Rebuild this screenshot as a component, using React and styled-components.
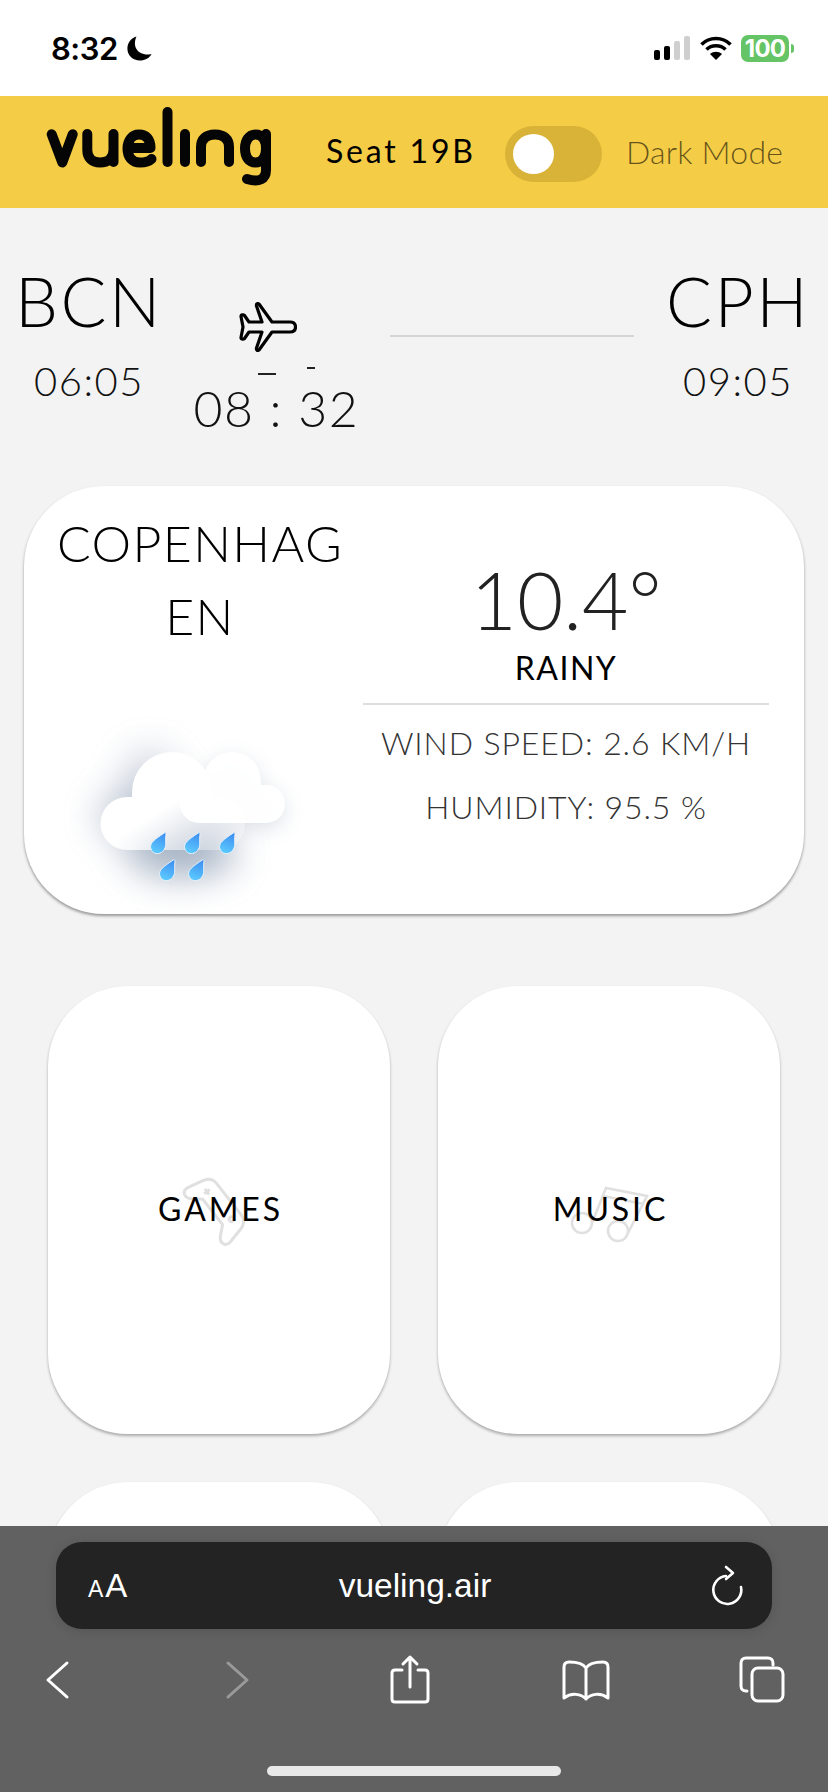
import React from "react";
import styled, { createGlobalStyle } from "styled-components";

const GlobalStyle = createGlobalStyle`
  html, body {
    margin: 0;
    padding: 0;
    height: 100%;
    overflow: hidden;
    background: #f3f3f3;
    font-family: "Lato", "Open Sans", sans-serif;
  }
`;

const Page = styled.div`
  width: 828px;
  height: 1792px;
  overflow: hidden;
  color: #000;
`;

const StatusBar = styled.div`
  height: 96px;
  background: #fff;
  display: flex;
  align-items: center;
  justify-content: space-between;
  padding: 0 39px 0 51px;
  box-sizing: border-box;
`;
const StatusTime = styled.div`
  display: flex;
  align-items: center;
  gap: 9px;
  font-family: "Inter", sans-serif;
  font-size: 31px;
  font-weight: 600;
  letter-spacing: -0.5px;
`;
const StatusIcons = styled.div`
  display: flex;
  align-items: center;
  gap: 9px;
`;
const Battery = styled.div`
  width: 48px;
  height: 27px;
  border-radius: 7px;
  background: #65c466;
  color: #fff;
  font-family: "Inter", sans-serif;
  font-size: 24px;
  font-weight: 700;
  letter-spacing: -0.8px;
  display: flex;
  align-items: center;
  justify-content: center;
  position: relative;
  &::after {
    content: "";
    position: absolute;
    right: -5px;
    top: 9px;
    width: 3px;
    height: 9px;
    border-radius: 0 3px 3px 0;
    background: #65c466;
  }
`;

const Header = styled.header`
  height: 112px;
  background: #f5cc45;
  display: flex;
  align-items: center;
  padding-left: 46px;
`;
const Logo = styled.svg`
  width: 226px;
  height: 79px;
  margin: -12px 54px 0 0;
  flex: none;
`;
const Seat = styled.span`
  width: 147px;
  font-size: 32px;
  font-weight: 400;
  letter-spacing: 2.8px;
  white-space: nowrap;
  margin: -3px 32px 0 0;
`;
const Toggle = styled.div`
  width: 97px;
  height: 56px;
  border-radius: 28px;
  background: #d9b338;
  display: flex;
  align-items: center;
  padding-left: 8px;
  box-sizing: border-box;
  margin: 4px 24px 0 0;
  flex: none;
`;
const Knob = styled.div`
  width: 41px;
  height: 40px;
  border-radius: 50%;
  background: #fff;
`;
const ModeLabel = styled.span`
  font-size: 32px;
  font-weight: 300;
  letter-spacing: 0.2px;
  white-space: nowrap;
  color: rgba(0, 0, 0, 0.6);
  margin-top: -2px;
`;

const FlightRow = styled.section`
  display: flex;
  justify-content: space-between;
  padding: 62px 22px 0 21px;
  height: 278px;
  box-sizing: border-box;
`;
const Airport = styled.div`
  width: 136px;
  display: flex;
  flex-direction: column;
  align-items: center;
`;
const Code = styled.div`
  font-size: 68px;
  font-weight: 300;
  line-height: 62px;
  letter-spacing: 2.5px;
  white-space: nowrap;
`;
const Time = styled.div`
  font-size: 40px;
  font-weight: 300;
  line-height: 46px;
  margin-top: 26px;
  letter-spacing: 1.5px;
  color: #111;
`;
const Track = styled.div`
  width: 440px;
  display: grid;
  grid-template-columns: 160px 1fr;
`;
const TrackLeft = styled.div`
  display: flex;
  flex-direction: column;
`;
const Plane = styled.svg`
  width: 58px;
  height: 50px;
  margin: 32px 0 0 45px;
`;
const Ticks = styled.div`
  height: 38px;
  position: relative;
`;
const Tick = styled.span`
  position: absolute;
  left: ${(p) => p.$left}px;
  top: ${(p) => p.$top}px;
  width: ${(p) => p.$width}px;
  height: 2px;
  background: #222;
`;
const Clock = styled.div`
  font-size: 50px;
  font-weight: 300;
  line-height: 48px;
  margin-top: -6px;
  letter-spacing: 1.5px;
  white-space: nowrap;
  color: #111;
`;
const TrackLine = styled.div`
  height: 2px;
  background: #d5d5d5;
  margin: 65px 0 0 36px;
`;

const WeatherCard = styled.section`
  margin: 0 24px;
  height: 428px;
  box-sizing: border-box;
  background: #fff;
  border-radius: 80px;
  box-shadow: 0 2px 3px rgba(0, 0, 0, 0.38);
  display: flex;
  padding: 0 35px 0 26px;
  gap: 13px;
`;
const CityColumn = styled.div`
  width: 300px;
  flex: none;
  display: flex;
  flex-direction: column;
  align-items: center;
`;
const City = styled.h2`
  margin: 21px 0 0;
  width: 300px;
  font-size: 50px;
  font-weight: 300;
  letter-spacing: 1.4px;
  line-height: 73px;
  text-align: center;
  word-break: break-all;
`;
const Clouds = styled.svg`
  width: 260px;
  height: 200px;
  margin-top: 48px;
  margin-left: -20px;
  overflow: visible;
`;
const Readings = styled.div`
  flex: 1;
  display: flex;
  flex-direction: column;
  align-items: center;
`;
const Temperature = styled.div`
  font-size: 80px;
  font-weight: 300;
  line-height: 80px;
  margin-top: 73px;
  color: #222;
`;
const Condition = styled.div`
  font-size: 32px;
  font-weight: 400;
  line-height: 40px;
  margin-top: 9px;
  letter-spacing: 1.5px;
`;
const Divider = styled.div`
  width: 100%;
  height: 2px;
  background: #dedede;
  margin: 15px 0 6px;
`;
const Reading = styled.div`
  font-size: 32px;
  font-weight: 300;
  line-height: 64px;
  letter-spacing: 0.9px;
  color: #333;
  white-space: nowrap;
`;

const Menu = styled.section`
  display: grid;
  grid-template-columns: 342px 342px;
  gap: 48px 48px;
  padding: 72px 48px 0;
`;
const MenuCard = styled.div`
  height: 448px;
  background: #fff;
  border-radius: 80px;
  box-shadow: 0 2px 3px rgba(0, 0, 0, 0.3);
  display: grid;
  place-items: center;
`;
const MenuIcon = styled.svg`
  grid-area: 1 / 1;
  width: 84px;
  height: 64px;
  margin-top: 6px;
  overflow: visible;
  fill: none;
  stroke: #e0e0e0;
  stroke-width: 2.6;
`;
const MenuLabel = styled.span`
  grid-area: 1 / 1;
  font-size: 32px;
  font-weight: 400;
  letter-spacing: 2.9px;
  padding: 0 0 3px 3px;
  position: relative;
`;

const BrowserBar = styled.footer`
  position: fixed;
  left: 0;
  right: 0;
  bottom: 0;
  height: 266px;
  width: 828px;
  background: #616161;
  box-sizing: border-box;
  padding-top: 16px;
`;
const UrlPill = styled.div`
  margin: 0 56px;
  height: 87px;
  border-radius: 26px;
  background: #232323;
  box-shadow: 0 2px 12px rgba(0, 0, 0, 0.12);
  color: #fff;
  display: grid;
  grid-template-columns: 1fr auto 1fr;
  align-items: center;
  padding: 0 27px 0 32px;
`;
const TextSize = styled.span`
  font-family: "Liberation Sans", Arial, sans-serif;
  font-size: 33px;
  display: flex;
  align-items: baseline;
  gap: 2px;
  & small {
    font-size: 23px;
  }
`;
const Url = styled.span`
  font-family: "Liberation Sans", Arial, sans-serif;
  font-size: 33.5px;
  margin-left: -3px;
`;
const Reload = styled.svg`
  justify-self: end;
  width: 34px;
  height: 42px;
  fill: none;
  stroke: #fff;
  stroke-width: 2.6;
  stroke-linecap: round;
  stroke-linejoin: round;
`;
const NavRow = styled.nav`
  display: flex;
  justify-content: space-between;
  padding: 27px 42px 0 34px;
`;
const NavIcon = styled.svg`
  width: 48px;
  height: 48px;
  overflow: visible;
  fill: none;
  stroke: ${(p) => (p.$dim ? "#9a9a9a" : "#fff")};
  stroke-width: 3;
  stroke-linecap: round;
  stroke-linejoin: round;
`;
const HomeBar = styled.div`
  width: 294px;
  height: 10px;
  border-radius: 5px;
  background: #e8e8e8;
  margin: 62px auto 0;
`;

const drops = [
  [158, 842],
  [192, 842],
  [227, 842],
  [167, 869],
  [196, 869],
];

const WeatherIcon = () => (
  <Clouds viewBox="60 700 260 200">
    <defs>
      <filter id="soft" x="-50%" y="-50%" width="200%" height="200%">
        <feGaussianBlur stdDeviation="18" />
      </filter>
      <filter id="softer" x="-40%" y="-40%" width="180%" height="180%">
        <feGaussianBlur stdDeviation="10" />
      </filter>
      <linearGradient id="drop" x1="0.7" y1="0" x2="0.4" y2="1">
        <stop offset="0" stopColor="#3f8ff0" />
        <stop offset="1" stopColor="#5ccbff" />
      </linearGradient>
      <linearGradient id="backCloud" x1="0.1" y1="0.3" x2="0.75" y2="1">
        <stop offset="0.45" stopColor="#fff" />
        <stop offset="1" stopColor="#fff" stopOpacity="0.35" />
      </linearGradient>
    </defs>
    <g filter="url(#soft)" fill="#6d829f" opacity="0.62">
      <ellipse cx="160" cy="815" rx="62" ry="30" opacity="0.75" />
      <ellipse cx="182" cy="852" rx="54" ry="24" />
      <circle cx="150" cy="775" r="26" opacity="0.5" />
    </g>
    <path
      filter="url(#softer)"
      d="M199 822a19 19 0 0 1 0-38h4v-4a29 29 0 0 1 58 0v4h5a19 19 0 0 1 0 38z"
      fill="#8a9ab0"
      opacity="0.28"
      transform="translate(0 6)"
    />
    <path
      d="M127 849a26.500 26.500 0 0 1 0-53h5v-5a40 40 0 0 1 80 0v5h6.500a26.500 26.500 0 0 1 0 53z"
      fill="url(#backCloud)"
    />
    <path
      d="M199 822a19 19 0 0 1 0-38h4v-4a29 29 0 0 1 58 0v4h5a19 19 0 0 1 0 38z"
      fill="#fff"
      opacity="0.96"
    />
    {drops.map(([x, y]) => (
      <path
        key={`${x}-${y}`}
        transform={`translate(${x} ${y})`}
        d="M6.600-10.200C7.800-11.200 8.200-9 7.800-7 7.400-2 8-1 7.600 2.600 7 7.600 3 10.600-.6 10.600-5 10.600-7.600 7-7.400 3.200-7.200 0-4.600-3 6.600-10.200z"
        fill="url(#drop)"
        stroke="#e8f2fb"
        strokeWidth="1"
      />
    ))}
  </Clouds>
);

const App = () => (
  <Page>
    <GlobalStyle />
    <StatusBar>
      <StatusTime>
        8:32
        <svg width="25" height="25" viewBox="0 0 25 25">
          <path d="M9.500.5C5.500 9 9 19 22 18.500c1 0 2-.2 2.600-.4C22.300 22.400 18 24.600 13 24.600 5.500 24.600.4 19 .4 12.500.4 7 4 2 9.500.5z" fill="#000" />
        </svg>
      </StatusTime>
      <StatusIcons>
        <svg width="37" height="24" viewBox="0 0 37 24">
          <rect x="0" y="14" width="6" height="10" rx="2" fill="#000" />
          <rect x="10" y="10" width="6" height="14" rx="2" fill="#000" />
          <rect x="20" y="5" width="6" height="19" rx="2" fill="#cfcfcf" />
          <rect x="30" y="0" width="6" height="24" rx="2" fill="#cfcfcf" />
        </svg>
        <svg width="32" height="24" viewBox="0 0 32 24" fill="none" stroke="#000" strokeWidth="3.600">
          <path d="M1.500 8.500C9.500.5 22.500.5 30.500 8.500" />
          <path d="M6.500 13.500C11.500 8.500 20.500 8.500 25.500 13.500" />
          <path d="M16 24l-6-6c3.500-3 8.500-3 12 0z" fill="#000" stroke="none" />
        </svg>
        <Battery>100</Battery>
      </StatusIcons>
    </StatusBar>

    <Header>
      <Logo viewBox="46 16 226 79" fill="none" stroke="#050505" strokeWidth="10" strokeLinecap="round" strokeLinejoin="round">
        <path d="M51.700 43.300L62.300 71.500 72.700 43.300" />
        <path d="M87.300 43V59C87.300 67 92 71.500 100 71.500 108 71.500 113.500 67 113.500 59V43M113.500 59V71" />
        <path d="M127.500 57H150.500C150.500 48 146 43.500 139 43.500 132 43.500 127.500 49.500 127.500 57.500 127.500 66 132 71.500 140 71.500 145 71.500 149 70.500 151.500 68" />
        <path d="M167.500 21V71" />
        <path d="M185 43V71" />
        <path d="M201 71V56C201 48 206 43.500 215 43.500 224 43.500 229 48 229 56V71" />
        <path d="M266 57.500C266 48.500 262 43.500 255.500 43.500 249 43.500 245 49.500 245 57.500 245 66 249 71.500 255.500 71.500 262 71.500 266 66 266 57.500M266 43V79C266 88 259 92 247 88" />
      </Logo>
      <Seat>Seat 19B</Seat>
      <Toggle>
        <Knob />
      </Toggle>
      <ModeLabel>Dark Mode</ModeLabel>
    </Header>

    <FlightRow>
      <Airport>
        <Code>BCN</Code>
        <Time>06:05</Time>
      </Airport>
      <Track>
        <TrackLeft>
          <Plane viewBox="0 0 58 50" fill="none" stroke="#000" strokeWidth="3.200" strokeLinejoin="round">
            <path d="M20 2c-1.500-1-3 0-2.500 2L23 20H10L5.500 13.500C4.500 12.500 2 12.500 2 14.500L4 25 2 35.500C2 37.500 4.500 37.500 5.500 36.500L10 30H23L17.500 46c-.5 2 1 3 2.500 2L33 30H51c4 0 5.500-2.500 5.500-5S55 20 51 20H33z" />
          </Plane>
          <Ticks>
            <Tick $left={64} $top={21} $width={18} />
            <Tick $left={113} $top={15} $width={8} />
          </Ticks>
          <Clock>08 : 32</Clock>
        </TrackLeft>
        <TrackLine />
      </Track>
      <Airport>
        <Code>CPH</Code>
        <Time>09:05</Time>
      </Airport>
    </FlightRow>

    <WeatherCard>
      <CityColumn>
        <City>COPENHAGEN</City>
        <WeatherIcon />
      </CityColumn>
      <Readings>
        <Temperature>10.4°</Temperature>
        <Condition>RAINY</Condition>
        <Divider />
        <Reading>WIND SPEED: 2.6 KM/H</Reading>
        <Reading>HUMIDITY: 95.5 %</Reading>
      </Readings>
    </WeatherCard>

    <Menu>
      <MenuCard>
        <MenuIcon viewBox="-42 -32 84 64">
          <g transform="translate(0 -6) rotate(52) scale(1.15)">
            <path d="M-17-11H17C23-11 26-7 27-2L30 11C31 17 25 19 21 15L14 7H-14L-21 15C-25 19-31 17-30 11L-27-2C-26-7-23-11-17-11z" />
            <path d="M-17-3V3M-20 0H-14" />
            <circle cx="15" cy="-2" r="2" />
          </g>
        </MenuIcon>
        <MenuLabel>GAMES</MenuLabel>
      </MenuCard>
      <MenuCard>
        <MenuIcon viewBox="-42 -32 84 64">
          <circle cx="-27" cy="10" r="10" />
          <circle cx="9" cy="18" r="10" />
          <path d="M-17 10L-3-25 38-17 19 20M-6-17L35-9" />
        </MenuIcon>
        <MenuLabel>MUSIC</MenuLabel>
      </MenuCard>
      <MenuCard />
      <MenuCard />
    </Menu>

    <BrowserBar>
      <UrlPill>
        <TextSize>
          <small>A</small>A
        </TextSize>
        <Url>vueling.air</Url>
        <Reload viewBox="0 0 34 42">
          <path d="M15 11A14 14 0 1 0 30 22" />
          <path d="M15 2L22 8 15 14" />
        </Reload>
      </UrlPill>
      <NavRow>
        <NavIcon viewBox="0 0 48 48">
          <path d="M33 7L14 24 33 41" />
        </NavIcon>
        <NavIcon viewBox="0 0 48 48" $dim>
          <path d="M18 7L37 24 18 41" />
        </NavIcon>
        <NavIcon viewBox="0 0 48 48">
          <path d="M16 14H9C7 14 6 15 6 17V43C6 45 7 46 9 46H39C41 46 42 45 42 43V17C42 15 41 14 39 14H32" />
          <path d="M24 31V1M17 8L24 1 31 8" />
        </NavIcon>
        <NavIcon viewBox="0 0 48 48">
          <path d="M24 12C21 7 15 6 7 6 3.500 6 2 8 2 11V42C10 36 19 38 24 43 29 38 38 36 46 42V11C46 8 44.500 6 41 6 33 6 27 7 24 12zM24 12V43" />
        </NavIcon>
        <NavIcon viewBox="0 0 48 48">
          <path d="M9 35H8C5 35 3 33 3 30V7C3 4 5 2 8 2H30C33 2 35 4 35 7V9" />
          <rect x="14" y="12" width="31" height="33" rx="6" />
        </NavIcon>
      </NavRow>
      <HomeBar />
    </BrowserBar>
  </Page>
);

export default App;
